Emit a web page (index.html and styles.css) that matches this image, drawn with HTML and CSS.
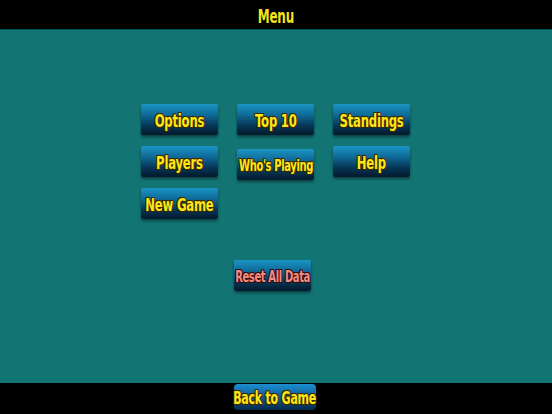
FILE: index.html
```html
<!DOCTYPE html>
<html>
<head>
<meta charset="utf-8">
<link rel="stylesheet" href="styles.css">
</head>
<body>
<div class="screen">
  <header class="topbar"><span class="title">Menu</span></header>
  <main class="content">
    <div class="grid">
      <div class="btn"><span class="lbl">Options</span></div>
      <div class="btn"><span class="lbl">Top 10</span></div>
      <div class="btn"><span class="lbl">Standings</span></div>
      <div class="btn"><span class="lbl">Players</span></div>
      <div class="btn btn-small btn-low"><span class="lbl">Who's Playing</span></div>
      <div class="btn"><span class="lbl">Help</span></div>
      <div class="btn"><span class="lbl">New Game</span></div>
    </div>
    <div class="reset-row">
      <div class="btn btn-small btn-reset"><span class="lbl">Reset All Data</span></div>
    </div>
  </main>
  <footer class="bottombar">
    <div class="btn btn-back"><span class="lbl">Back to Game</span></div>
  </footer>
</div>
</body>
</html>
```
FILE: styles.css
```css
html, body {
  margin: 0;
  padding: 0;
}
body {
  width: 552px;
  height: 414px;
  overflow: hidden;
  background: #000;
  font-family: "DejaVu Sans Condensed", "DejaVu Sans", sans-serif;
}
.screen {
  display: flex;
  flex-direction: column;
  width: 552px;
  height: 414px;
}
.topbar {
  height: 30px;
  background: #000;
  display: flex;
  justify-content: center;
  align-items: center;
  border-bottom: 1px solid #005a5a;
  box-sizing: border-box;
}
.title {
  display: inline-block;
  color: #f5e41c;
  font-weight: bold;
  font-size: 19px;
  letter-spacing: -0.3px;
  transform: scaleX(0.7);
  margin-top: 2px;
}
.content {
  flex: 1;
  background: #127574;
  display: flex;
  flex-direction: column;
  padding-top: 74px;
  padding-left: 141px;
  box-sizing: border-box;
}
.grid {
  display: grid;
  grid-template-columns: 77px 77px 77px;
  grid-auto-rows: 31px;
  column-gap: 19px;
  row-gap: 11px;
  align-items: start;
}
.btn {
  height: 31px;
  box-sizing: border-box;
  display: flex;
  justify-content: center;
  align-items: center;
  background: linear-gradient(to bottom, #1b95c6 0%, #0f6a98 35%, #073656 70%, #03192c 100%);
  border-radius: 2px;
  box-shadow: 0 2px 3px rgba(0, 0, 0, 0.45);
  color: #ffe619;
  font-weight: bold;
  font-size: 18px;
  white-space: nowrap;
  text-shadow:
    -1px -1px 0 #3a2a00, 1px -1px 0 #3a2a00,
    -1px 1px 0 #3a2a00, 1px 1px 0 #3a2a00,
    0 1px 0 #3a2a00, 0 -1px 0 #3a2a00,
    1px 0 0 #3a2a00, -1px 0 0 #3a2a00;
}
.lbl {
  display: inline-block;
  transform: scaleX(0.72);
  margin-top: 2px;
  letter-spacing: -0.3px;
}
.btn-small {
  font-size: 15px;
}
.btn-small .lbl {
  transform: scaleX(0.74);
  letter-spacing: -0.5px;
}
.btn-low {
  margin-top: 3px;
}
.reset-row {
  padding-left: 93px;
  margin-top: 41px;
  display: flex;
}
.btn-reset {
  width: 77px;
  color: #f48a80;
  text-shadow:
    -1px -1px 0 #301010, 1px -1px 0 #301010,
    -1px 1px 0 #301010, 1px 1px 0 #301010,
    0 1px 0 #301010, 0 -1px 0 #301010,
    1px 0 0 #301010, -1px 0 0 #301010;
}
.bottombar {
  height: 31px;
  background: #000;
  display: flex;
  align-items: flex-start;
  padding-left: 234px;
  padding-top: 1px;
  box-sizing: border-box;
}
.btn-back {
  width: 82px;
  height: 26px;
  border-radius: 4px;
  font-size: 17px;
  background: linear-gradient(to bottom, #1d8fd0 0%, #0f5f9a 45%, #05284a 100%);
}
.btn-back .lbl {
  transform: scaleX(0.72);
  margin-top: 1px;
}
```
